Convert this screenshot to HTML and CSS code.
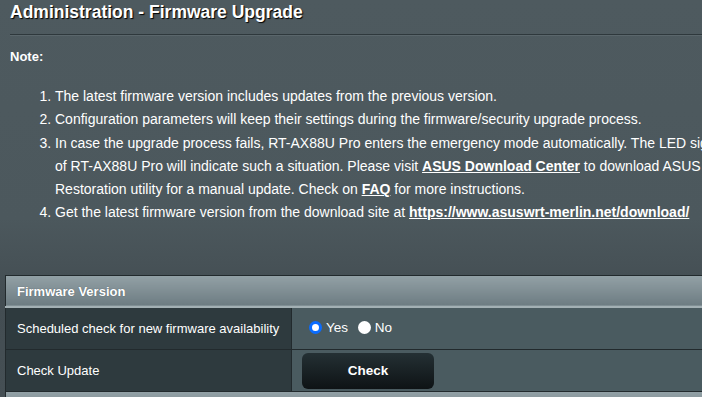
FILE: index.html
```html
<!DOCTYPE html>
<html lang="en">
<head>
    <meta charset="UTF-8">
    <title>Administration - Firmware Upgrade</title>
    <link rel="stylesheet" href="styles.css">
</head>
<body>
    <div class="page">
        <h1 class="page-title">Administration - Firmware Upgrade</h1>
        <div class="divider"></div>

        <p class="note-title">Note:</p>
        <ol class="notes">
            <li>The latest firmware version includes updates from the previous version.</li>
            <li>Configuration parameters will keep their settings during the firmware/security upgrade process.</li>
            <li>In case the upgrade process fails, <span class="nobr">RT-AX88U</span> Pro enters the emergency mode automatically. The LED signals at the front of <span class="nobr">RT-AX88U</span> Pro will indicate such a situation. Please visit <a href="#">ASUS Download Center</a> to download ASUS Firmware Restoration utility for a manual update. Check on <a href="#">FAQ</a> for more instructions.</li>
            <li>Get the latest firmware version from the download site at <a href="#">https://www.asuswrt-merlin.net/download/</a></li>
        </ol>

        <table class="fw-table">
            <thead>
                <tr><th colspan="2">Firmware Version</th></tr>
            </thead>
            <tbody>
                <tr>
                    <td class="label">Scheduled check for new firmware availability</td>
                    <td class="value">
                        <label class="radio"><input type="radio" name="sched" checked> Yes</label>
                        <label class="radio"><input type="radio" name="sched"> No</label>
                    </td>
                </tr>
                <tr>
                    <td class="label">Check Update</td>
                    <td class="value"><button class="btn">Check</button></td>
                </tr>
            </tbody>
            <thead>
                <tr><th colspan="2">Firmware Upgrade</th></tr>
            </thead>
        </table>
    </div>
</body>
</html>
```

FILE: styles.css
```css
* {
    box-sizing: border-box;
}
html, body {
    margin: 0;
    padding: 0;
    height: 100%;
}
body {
    font-family: "Liberation Sans", Arial, sans-serif;
    color: #fff;
    background: linear-gradient(180deg, #4e5a5f 0%, #4c585d 55%, #434d52 75%, #454f54 100%);
    overflow: hidden;
}
.page {
    width: 900px;
}
.page-title {
    margin: 0 0 0 10px;
    padding-top: 1px;
    font-size: 17.5px;
    line-height: 22px;
    font-weight: bold;
    text-shadow: 1px 1px 1px #000;
}
.divider {
    margin: 11px 0 0 10px;
    height: 2px;
    background: #2e383c;
    border-bottom: 1px solid #5a666b;
}
.note-title {
    margin: 11px 0 0 10px;
    font-size: 13px;
    line-height: 20px;
    font-weight: bold;
}
.notes {
    margin: 18px 0 0 10px;
    padding-left: 45px;
    width: 800px;
    font-size: 14px;
    line-height: 23.3px;
}
.notes a {
    color: #fff;
    font-weight: bold;
    text-decoration: underline;
}
.nobr {
    white-space: nowrap;
}
.fw-table {
    margin: 50px 0 0 5px;
    width: 880px;
    border-collapse: collapse;
    font-size: 13px;
}
.fw-table th {
    height: 32px;
    padding: 0 11px;
    text-align: left;
    font-weight: bold;
    background: linear-gradient(180deg, #93a1a6 0%, #6d7c82 100%);
    border: 1px solid #222a2d;
    border-bottom: 2px solid #a3b0b4;
    text-shadow: 0 0 1px #4a555a;
}
.fw-table td {
    border: 1px solid #222a2d;
    height: 42px;
}
.fw-table td.label {
    width: 286px;
    padding: 0 11px;
    background: #2e3a3e;
}
.fw-table td.value {
    padding: 0 10px;
    background: #4a5b60;
}
.radio {
    display: inline-flex;
    align-items: center;
    gap: 4px;
    margin: 0 6px 0 7px;
    font-size: 13.5px;
}
.radio + .radio {
    margin-left: 0;
}
.radio input {
    appearance: none;
    margin: 0;
    width: 13px;
    height: 13px;
    border-radius: 50%;
    background: #fff;
}
.radio input:checked {
    border: 3px solid #0a6cff;
}
.btn {
    display: block;
    width: 132px;
    height: 36px;
    margin-top: 1px;
    border: none;
    border-radius: 6px;
    background: linear-gradient(180deg, #243034 0%, #0e1315 100%);
    color: #fff;
    font-family: "Liberation Sans", Arial, sans-serif;
    font-size: 13.5px;
    font-weight: bold;
    cursor: pointer;
}
```
